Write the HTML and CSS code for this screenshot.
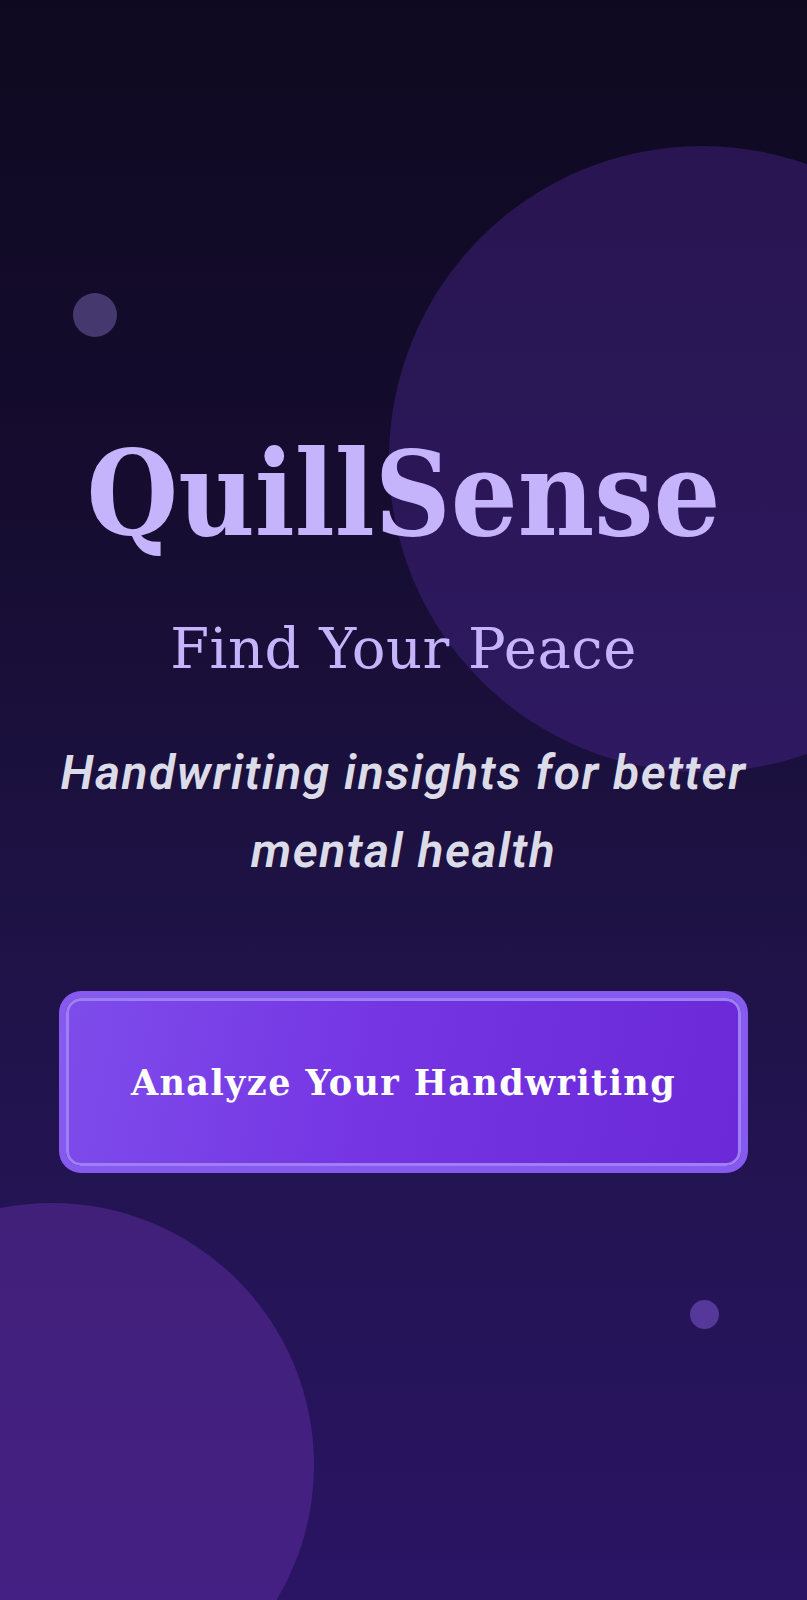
FILE: index.html
```html
<!DOCTYPE html>
<html lang="en">
<head>
<meta charset="utf-8">
<title>QuillSense</title>
<link rel="stylesheet" href="styles.css">
</head>
<body>
<main class="screen">
  <div class="orb orb-large"></div>
  <div class="orb orb-bottom"></div>
  <div class="dot dot-top"></div>
  <div class="dot dot-bottom"></div>

  <section class="hero">
    <h1 class="title">QuillSense</h1>
    <p class="subtitle">Find Your Peace</p>
    <p class="tagline">Handwriting insights for better<br>mental health</p>
    <button class="cta" type="button">Analyze Your Handwriting</button>
  </section>
</main>
</body>
</html>
```

FILE: styles.css
```css
* { box-sizing: border-box; }

html, body {
  margin: 0;
  padding: 0;
}

body {
  width: 807px;
  height: 1600px;
  overflow: hidden;
}

.screen {
  position: relative;
  width: 807px;
  height: 1600px;
  overflow: hidden;
  background: linear-gradient(180deg, #0f0920 0%, #150c2f 30%, #1d1243 55%, #241455 78%, #2a1464 100%);
}

.orb, .dot {
  position: absolute;
  border-radius: 50%;
}

.orb-large {
  left: 389px;
  top: 146px;
  width: 626px;
  height: 626px;
  background: rgba(91, 48, 175, 0.32);
}

.orb-bottom {
  left: -210px;
  top: 1203px;
  width: 524px;
  height: 524px;
  background: rgba(109, 50, 180, 0.40);
}

.dot-top {
  left: 73px;
  top: 293px;
  width: 44px;
  height: 44px;
  background: #45386e;
}

.dot-bottom {
  left: 690px;
  top: 1300px;
  width: 29px;
  height: 29px;
  background: #553899;
}

.hero {
  position: relative;
  display: flex;
  flex-direction: column;
  align-items: center;
  padding-top: 436px;
}

.title {
  margin: 0;
  font-family: "DejaVu Serif Condensed", "DejaVu Serif", serif;
  font-weight: 700;
  font-size: 117px;
  line-height: 1;
  color: #c5b4fc;
}

.subtitle {
  margin: 68px 0 0;
  font-family: "DejaVu Serif", serif;
  font-weight: 400;
  font-size: 56px;
  line-height: 1;
  letter-spacing: 0.5px;
  color: #c5b4fc;
}

.tagline {
  margin: 57px 0 0;
  font-family: Roboto, "Liberation Sans", sans-serif;
  font-style: italic;
  font-weight: 600;
  font-size: 48px;
  line-height: 78px;
  letter-spacing: 1.5px;
  text-align: center;
  color: #dcdbe8;
}

.cta {
  margin-top: 108px;
  width: 675px;
  height: 168px;
  border: 3px solid #9f7ff6;
  border-radius: 15px;
  box-shadow: 0 0 0 7px #8659ef;
  background: linear-gradient(100deg, #7e4ceb 0%, #7535e3 45%, #6b29d8 100%);
  font-family: "DejaVu Serif", serif;
  font-weight: 700;
  font-size: 35px;
  letter-spacing: 1.4px;
  color: #ffffff;
  cursor: pointer;
}
```
